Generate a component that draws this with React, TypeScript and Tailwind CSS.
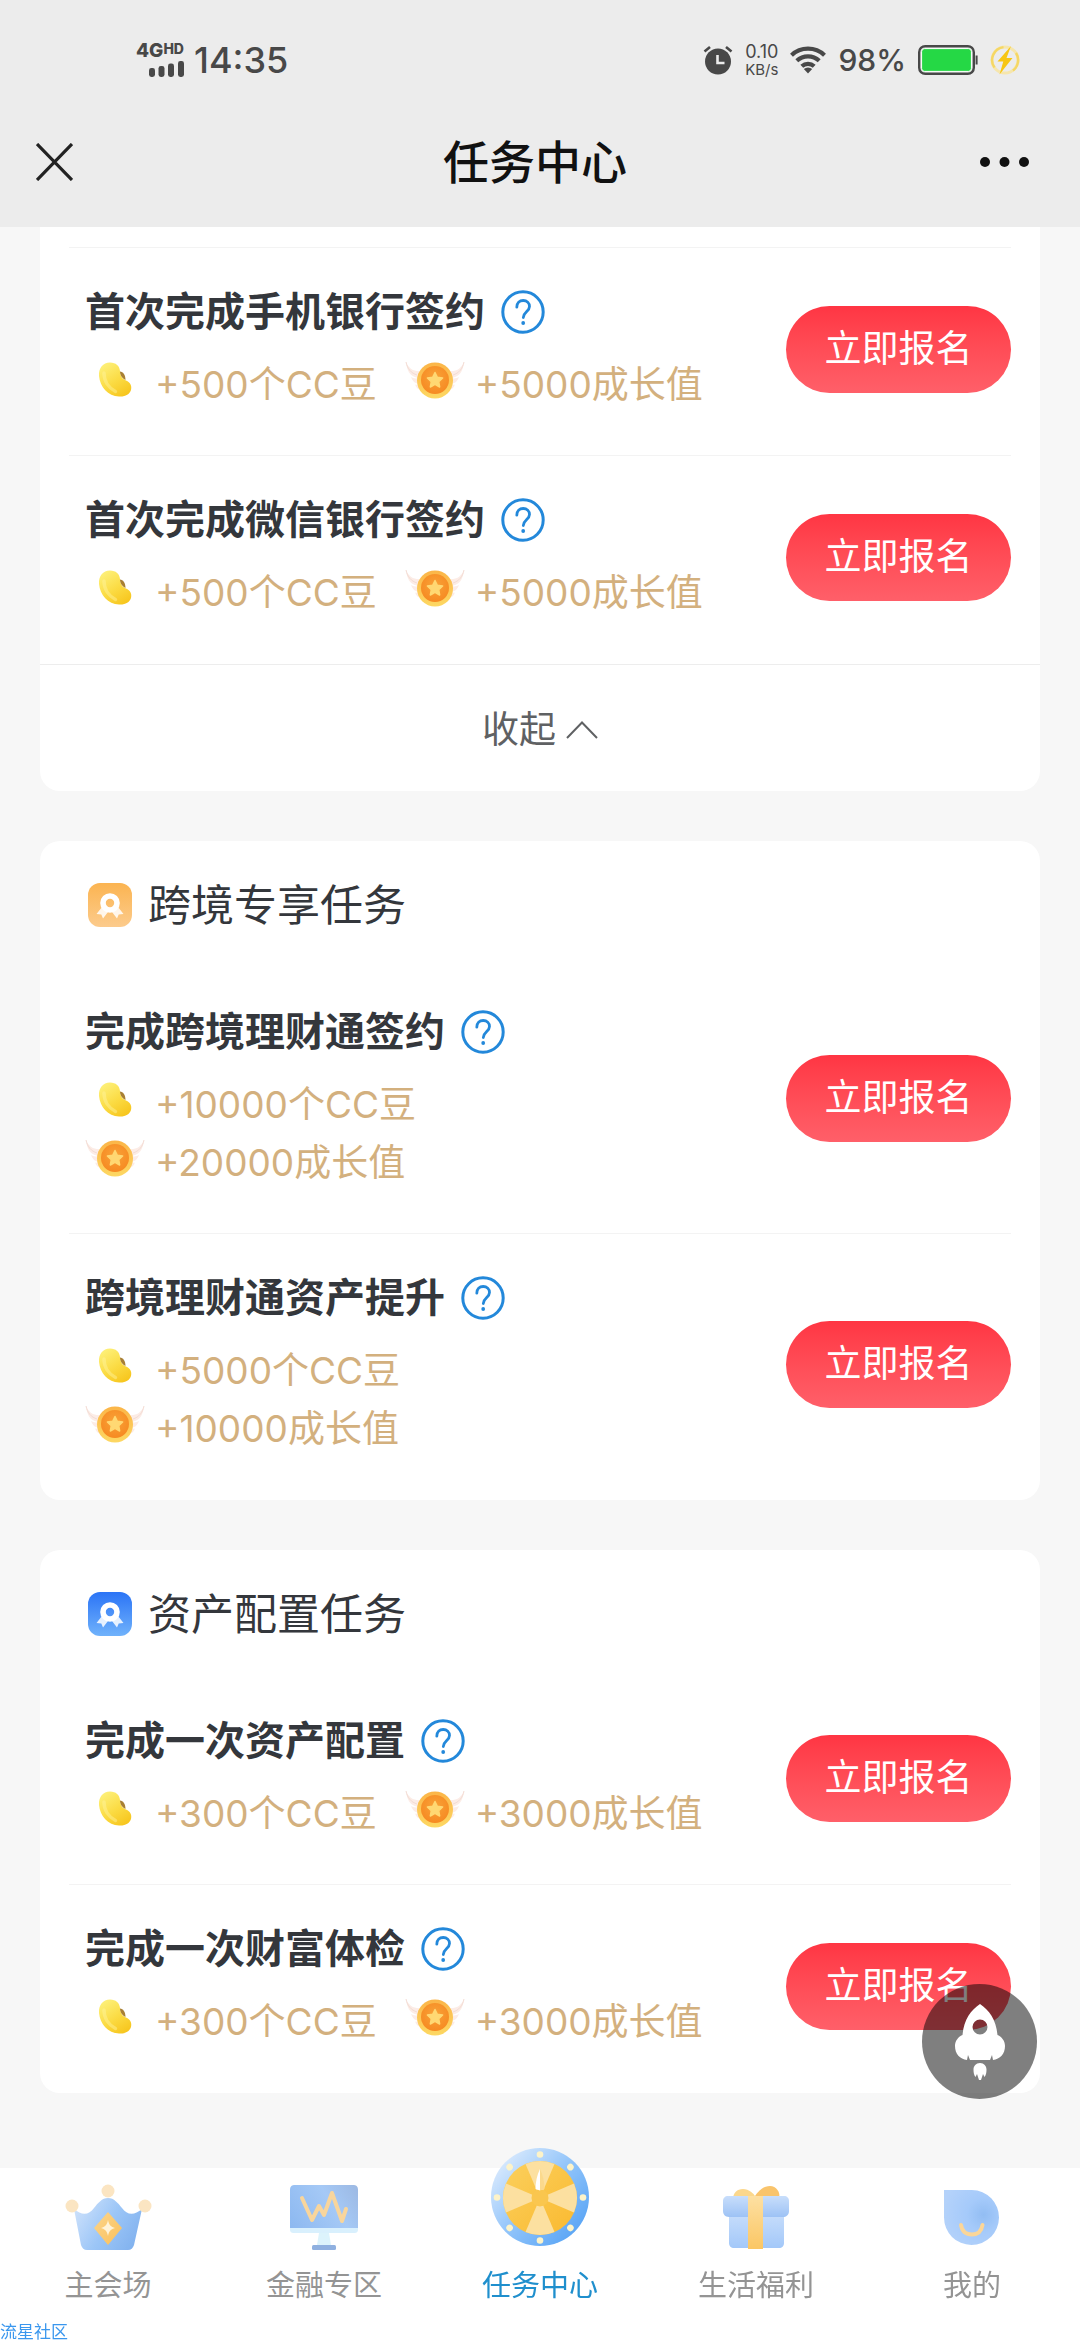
import React, { useState } from "react";

type Task = {
    title: string;
    beans: number;
    growth: number;
    stacked?: boolean;
};

const SIGN_TASKS: Task[] = [
    { title: "首次完成手机银行签约", beans: 500, growth: 5000 },
    { title: "首次完成微信银行签约", beans: 500, growth: 5000 },
];

const CROSS_BORDER_TASKS: Task[] = [
    { title: "完成跨境理财通签约", beans: 10000, growth: 20000, stacked: true },
    { title: "跨境理财通资产提升", beans: 5000, growth: 10000, stacked: true },
];

const ASSET_TASKS: Task[] = [
    { title: "完成一次资产配置", beans: 300, growth: 3000 },
    { title: "完成一次财富体检", beans: 300, growth: 3000 },
];

/* ---------- status bar ---------- */

const AlarmIcon = () => (
    <svg width="30" height="30" viewBox="0 0 30 30" fill="none">
        <circle cx="15" cy="16.5" r="13" fill="#484848" />
        <path d="M1.5 6.5 7 2M28.5 6.5 23 2" stroke="#484848" strokeWidth="2.6" />
        <path d="M14.5 10v8h7" stroke="#ececec" strokeWidth="2.6" />
    </svg>
);

const WifiIcon = () => (
    <svg width="36" height="28" viewBox="0 0 36 28" fill="none" stroke="#484848" strokeWidth="4.2">
        <path d="M1.5 9.2a24 24 0 0 1 33 0" />
        <path d="M6.8 14.8a16.4 16.4 0 0 1 22.4 0" />
        <path d="M11.8 20.2a9.2 9.2 0 0 1 12.4 0" />
        <path d="m18 27.5-4.2-4.4a6.2 6.2 0 0 1 8.4 0Z" fill="#484848" stroke="none" />
    </svg>
);

const BatteryIcon = () => (
    <svg width="60" height="30" viewBox="0 0 60 30" fill="none">
        <rect x="1.2" y="1.2" width="54.6" height="27.6" rx="6" stroke="#484848" strokeWidth="2.4" />
        <rect x="3.6" y="3.6" width="49.8" height="22.8" rx="3" fill="#25d845" stroke="#fff" strokeWidth="1" />
        <path d="M58.6 10.5v9" stroke="#484848" strokeWidth="2" />
    </svg>
);

const ChargeIcon = () => (
    <svg width="30" height="30" viewBox="0 0 30 30" fill="none">
        <circle cx="15" cy="15" r="13" stroke="#f6e6ac" strokeWidth="3" />
        <path d="M4.5 22.5a13 13 0 0 1 9-20.4M26 8a13 13 0 0 1-3 17.500" stroke="#f5d765" strokeWidth="2.4" />
        <path d="M21 1 7.5 16.5h5.8L9.5 29.5 22.5 13h-6Z" fill="#f7c614" />
    </svg>
);

const StatusBar = () => (
    <div className="flex h-[120px] items-center justify-between pl-[136px] pr-[60px] text-[#484848]">
        <div className="flex items-center gap-2.5">
            <div className="flex flex-col items-end gap-0.5">
                <div className="flex items-start font-extrabold">
                    <span className="text-[19px] leading-[16px]">4G</span>
                    <span className="text-[14px] leading-[12px]">HD</span>
                </div>
                <svg width="35" height="16" viewBox="0 0 35 16" fill="#484848">
                    <rect x="0" y="7" width="6" height="9" rx="2.4" />
                    <rect x="9.5" y="5" width="6" height="11" rx="2.4" />
                    <rect x="19" y="2.5" width="6" height="13.5" rx="2.4" />
                    <rect x="29" y="0" width="6" height="16" rx="2.4" />
                </svg>
            </div>
            <span className="text-[36px] font-medium leading-10">14:35</span>
        </div>
        <div className="flex items-center gap-3">
            <AlarmIcon />
            <div className="flex flex-col">
                <span className="text-[18px] leading-5">0.10</span>
                <span className="text-[15px] leading-4">KB/s</span>
            </div>
            <WifiIcon />
            <span className="text-[30px] font-medium leading-10">98%</span>
            <BatteryIcon />
            <ChargeIcon />
        </div>
    </div>
);

const TitleBar = () => (
    <div className="flex h-[107px] items-start justify-between pl-9 pr-[46px] pt-3.5">
        <button type="button" aria-label="关闭" className="flex h-14 w-14 items-center">
            <svg width="37" height="38" viewBox="0 0 37 38" fill="none" stroke="#222" strokeWidth="3.2">
                <path d="m1 1 35 36M36 1 1 37" />
            </svg>
        </button>
        <h1 className="text-[46px] font-medium leading-14 text-[#111]">任务中心</h1>
        <button type="button" aria-label="更多" className="flex h-14 w-14 items-center justify-end">
            <svg width="60" height="12" viewBox="0 0 60 12" fill="#111" className="shrink-0">
                <circle cx="11" cy="6" r="5" />
                <circle cx="30.5" cy="6" r="5" />
                <circle cx="50" cy="6" r="5" />
            </svg>
        </button>
    </div>
);

/* ---------- task cards ---------- */

const HelpIcon = () => (
    <svg width="44" height="44" viewBox="0 0 44 44" fill="none" stroke="#2388da" strokeLinecap="round">
        <circle cx="22" cy="22" r="20.2" strokeWidth="3" />
        <path d="M15.8 17.2c0-4.2 2.7-6.7 6.4-6.7s6.3 2.5 6.3 6c0 5-6.2 5.6-6.2 11" strokeWidth="2.8" />
        <circle cx="22.2" cy="33" r="1.9" fill="#2388da" stroke="none" />
    </svg>
);

const BeanIcon = () => (
    <svg width="60" height="48" viewBox="0 0 60 48" fill="none" className="shrink-0">
        <defs>
            <linearGradient id="bean" x1="16" y1="12" x2="36" y2="42" gradientUnits="userSpaceOnUse">
                <stop stopColor="#fdee74" />
                <stop offset=".5" stopColor="#fbdc45" />
                <stop offset="1" stopColor="#f7c61e" />
            </linearGradient>
        </defs>
        <path
            d="M14 20C13.500 12 18 6.500 25 6.500c6 0 9.500 3.500 10 8.500.4 5 2 8 6 9.500 4.500 2 6 5.500 5 9.500-1.500 4.500-6 7-12 6.500C23 40 15 31 14 20Z"
            fill="url(#bean)"
        />
        <path d="M19 17c0 8 4.500 15 11.500 18.500" stroke="#fff3a0" strokeWidth="3.500" strokeLinecap="round" opacity=".45" />
        <path d="M35 15.500c3 0 5.500 3.500 5.500 8.500-3.500-1.500-5.500-5-5.500-8.500Z" fill="#a87f33" />
    </svg>
);

const MedalIcon = () => (
    <svg width="60" height="48" viewBox="0 0 60 48" fill="none" className="shrink-0">
        <defs>
            <radialGradient id="medal" cx=".5" cy=".4" r=".6">
                <stop stopColor="#f9a238" />
                <stop offset="1" stopColor="#f68a22" />
            </radialGradient>
            <linearGradient id="medalRim" x1="0" y1="0" x2="0" y2="1">
                <stop stopColor="#fbb548" />
                <stop offset="1" stopColor="#fdd863" />
            </linearGradient>
        </defs>
        <path
            d="M1 6c1 10 5 15 13 16-4 1-6 0-8-1 2 5 5 7 9 7-2 1-4 1-5 .500 2 5 5 6 9 5L17 15C9 16 4 13 1 6ZM59 6c-1 10-5 15-13 16 4 1 6 0 8-1-2 5-5 7-9 7 2 1 4 1 5 .500-2 5-5 6-9 5l2-18.500c8 1 13-2 16-9Z"
            fill="#fcece6"
        />
        <path d="M1 6c1.500 7 5 11 11 13M59 6c-1.500 7-5 11-11 13" stroke="#f3dcd4" strokeWidth="1" />
        <circle cx="30" cy="24.500" r="18" fill="url(#medalRim)" />
        <circle cx="30" cy="24" r="14" fill="url(#medal)" />
        <path
            d="m30 16.500 2.300 4.800 5.300.700-3.900 3.700.950 5.300-4.650-2.600-4.650 2.600.950-5.300-3.900-3.700 5.300-.700Z"
            fill="#ffd873"
            stroke="#ffd873"
            strokeWidth="1.500"
            strokeLinejoin="round"
        />
    </svg>
);

const Reward = ({ icon, text }: { icon: React.ReactNode; text: string }) => (
    <div className="flex items-start gap-2.5">
        {icon}
        <span className="text-[37px] leading-[58px] text-[#d3b07e]">{text}</span>
    </div>
);

const TaskRow = ({ task }: { task: Task }) => (
    <li className="mx-[29px] flex items-center justify-between border-b border-[#f3f3f3] pb-[41px] pl-4 pt-9 last:border-transparent">
        <div className="flex flex-col gap-4">
            <div className="flex items-center gap-4">
                <h3 className="text-[40px] font-bold leading-14 text-[#34373c]">{task.title}</h3>
                <button type="button" aria-label={`${task.title}说明`}>
                    <HelpIcon />
                </button>
            </div>
            <div className={task.stacked ? "flex flex-col" : "flex gap-7"}>
                <Reward icon={<BeanIcon />} text={`+${task.beans}个CC豆`} />
                <Reward icon={<MedalIcon />} text={`+${task.growth}成长值`} />
            </div>
        </div>
        <button
            type="button"
            className="h-[87px] w-[225px] shrink-0 rounded-full bg-linear-to-b from-[#ff3543] to-[#ff5f69] pb-0.5 text-[37px] leading-none text-white"
        >
            立即报名
        </button>
    </li>
);

const MedalBadge = ({ tone }: { tone: "orange" | "blue" }) => {
    const [from, to] = tone === "orange" ? ["#fbb451", "#fccb8c"] : ["#2b74f6", "#70b2fb"];
    return (
        <svg width="44" height="44" viewBox="0 0 44 44" fill="none">
            <defs>
                <linearGradient id={`badge-${tone}`} x1="0" y1="0" x2="0" y2="1">
                    <stop stopColor={from} />
                    <stop offset="1" stopColor={to} />
                </linearGradient>
            </defs>
            <rect width="44" height="44" rx="12" fill={`url(#badge-${tone})`} />
            <path d="m14 24-5.500 7 4.800.500 1.700 4 5-6.500M30 24l5.500 7-4.800.500-1.700 4-5-6.500" fill="#fff" opacity=".85" />
            <circle cx="22" cy="20" r="7" stroke="#fff" strokeWidth="5.600" />
        </svg>
    );
};

const TaskCard = ({ title, tone, tasks }: { title: string; tone: "orange" | "blue"; tasks: Task[] }) => (
    <section className="rounded-[20px] bg-white">
        <div className="flex h-[127px] items-center gap-4 pl-12">
            <MedalBadge tone={tone} />
            <h2 className="text-[43px] leading-14 text-[#34373c]">{title}</h2>
        </div>
        <ul>
            {tasks.map((task) => (
                <TaskRow key={task.title} task={task} />
            ))}
        </ul>
    </section>
);

/* ---------- bottom navigation ---------- */

const CrownIcon = () => (
    <svg width="88" height="66" viewBox="0 0 88 66" fill="none" className="shrink-0">
        <defs>
            <linearGradient id="crown" x1="12" y1="20" x2="76" y2="60" gradientUnits="userSpaceOnUse">
                <stop stopColor="#cfe2fb" />
                <stop offset=".5" stopColor="#9cc6f7" />
                <stop offset="1" stopColor="#7fb0ee" />
            </linearGradient>
            <linearGradient id="crownGem" x1="0" y1="0" x2="1" y2="1">
                <stop stopColor="#fbd58d" />
                <stop offset="1" stopColor="#fbc05a" />
            </linearGradient>
        </defs>
        <path
            d="M10 25c8 7 15 6 20-1 4-5 8-10 14-10s10 5 14 10c5 7 12 8 20 1l-8 36c-1 3-3 5-6 5H23c-3 0-5-2-6-5Z"
            fill="url(#crown)"
        />
        <circle cx="8" cy="22" r="6.500" fill="#fbe5c2" />
        <circle cx="44" cy="7" r="6.500" fill="#fbe5c2" />
        <circle cx="81" cy="22" r="6.500" fill="#fbe5c2" />
        <path d="M44 28 58 44 44 61 30 44Z" fill="url(#crownGem)" />
        <path d="M44 36c1 5 3 7 7 8-4 1-6 3-7 8-1-5-3-7-7-8 4-1 6-3 7-8Z" fill="#fff3d8" />
    </svg>
);

const MonitorIcon = () => (
    <svg width="68" height="66" viewBox="0 0 68 66" fill="none" className="shrink-0">
        <defs>
            <linearGradient id="screen" x1="0" y1="44" x2="68" y2="0" gradientUnits="userSpaceOnUse">
                <stop stopColor="#8cb8f0" />
                <stop offset=".6" stopColor="#a5c9f6" />
                <stop offset="1" stopColor="#9cb8e2" />
            </linearGradient>
        </defs>
        <path d="M0 43h68v2c0 3-1 4-4 4H4c-3 0-4-1-4-4Z" fill="#d9f0fd" />
        <path d="M0 6c0-4 2-5 5-5h58c3 0 5 1 5 5v38H0Z" fill="url(#screen)" />
        <path d="M29 49h10l2 12H27Z" fill="#dcf3fc" />
        <rect x="22" y="61" width="24" height="5" rx="1.500" fill="#8fb0e0" />
        <path
            d="m12 14 10 22 7-14 5 9 8-22 10 28 4-12"
            stroke="#f8d59c"
            strokeWidth="4"
            strokeLinejoin="round"
            strokeLinecap="round"
        />
    </svg>
);

const WheelIcon = () => (
    <svg width="98" height="102" viewBox="0 0 98 102" fill="none" className="shrink-0">
        <defs>
            <linearGradient id="wheelRim" x1="10" y1="15" x2="88" y2="85" gradientUnits="userSpaceOnUse">
                <stop stopColor="#d6e8fd" />
                <stop offset=".5" stopColor="#8fc3fa" />
                <stop offset="1" stopColor="#5aa5f5" />
            </linearGradient>
            <linearGradient id="wheelFace" x1="0" y1="0" x2="1" y2="1">
                <stop stopColor="#fbd05e" />
                <stop offset="1" stopColor="#fab92f" />
            </linearGradient>
        </defs>
        <circle cx="49" cy="49" r="49" fill="url(#wheelRim)" />
        <circle cx="49" cy="50" r="37" fill="url(#wheelFace)" />
        {[0, 90, 180, 270].map((deg) => (
            <path key={deg} d="M49 50 34.500 16a37 37 0 0 1 29 0Z" fill="#fce0a0" transform={`rotate(${deg} 49 50)`} />
        ))}
        {[0, 45, 90, 135, 180, 225, 270, 315].map((deg) => (
            <circle key={deg} cx="49" cy="6.500" r="3.300" fill="#fdf3c8" transform={`rotate(${deg} 49 49.500)`} />
        ))}
        <circle cx="49" cy="50" r="8.500" fill="#fac64e" />
        <path d="M49 21c-3 6-4.500 13-4.500 20l4.500 1.500Z" fill="#fff" />
        <path d="M49 21c3 6 4.500 13 4.500 20L49 42.500Z" fill="#fbd98c" />
    </svg>
);

const GiftIcon = () => (
    <svg width="66" height="66" viewBox="0 0 66 66" fill="none" className="shrink-0">
        <defs>
            <linearGradient id="giftLid" x1="0" y1="0" x2="0" y2="1">
                <stop stopColor="#c8defb" />
                <stop offset="1" stopColor="#9dc2f5" />
            </linearGradient>
            <linearGradient id="giftBox" x1="0" y1="0" x2="0" y2="1">
                <stop stopColor="#c5dcfb" />
                <stop offset="1" stopColor="#a3c8f9" />
            </linearGradient>
            <linearGradient id="giftRibbon" x1="0" y1="0" x2="0" y2="1">
                <stop stopColor="#fde0a2" />
                <stop offset="1" stopColor="#fbc664" />
            </linearGradient>
        </defs>
        <path d="M10 15c0-6 4-10 10-10s11 5 12 7v3Z" fill="#fbd78c" />
        <path d="M56 15c2-7-3-13-9-13S36 6 32 12v3Z" fill="#f9c46c" />
        <path d="M6 31h55v28c0 3-2 5-5 5H11c-3 0-5-2-5-5Z" fill="url(#giftBox)" />
        <path d="M0 17c0-3 2-5 5-5h56c3 0 5 2 5 5v10c0 4-3 6-6 6H6c-4 0-6-3-6-6Z" fill="url(#giftLid)" />
        <path d="M25 12h15v21H25ZM25 33h15v32H25Z" fill="url(#giftRibbon)" />
    </svg>
);

const MineIcon = () => (
    <svg width="56" height="60" viewBox="0 0 56 60" fill="none" className="shrink-0">
        <defs>
            <radialGradient id="mine" cx=".72" cy=".45" r=".75">
                <stop stopColor="#92bdf3" />
                <stop offset=".4" stopColor="#a5cafa" />
                <stop offset="1" stopColor="#b4d2fa" />
            </radialGradient>
        </defs>
        <path d="M0 0h28a27.500 27.500 0 1 1-28 27.500Z" fill="url(#mine)" />
        <path d="M17 35c1 6 5 9.500 11 9.500S37.500 41 38.500 35" stroke="#fbd698" strokeWidth="4" strokeLinecap="round" />
    </svg>
);

const NAV_ITEMS = [
    { label: "主会场", icon: <CrownIcon /> },
    { label: "金融专区", icon: <MonitorIcon /> },
    { label: "任务中心", icon: <WheelIcon />, active: true },
    { label: "生活福利", icon: <GiftIcon /> },
    { label: "我的", icon: <MineIcon /> },
];

const BottomNav = () => (
    <nav className="sticky bottom-0 grid grid-cols-5 bg-white">
        {NAV_ITEMS.map(({ label, icon, active }) => (
            <a
                key={label}
                href="#"
                className={`flex h-[172px] flex-col items-center justify-end gap-4 pb-[34px] text-[29px] leading-10 ${active ? "text-[#1f8fcd]" : "text-[#949494]"}`}
            >
                {icon}
                <span>{label}</span>
            </a>
        ))}
        <span className="absolute bottom-0 left-0 text-[17px] leading-4 text-[#3a97ee]">流星社区</span>
    </nav>
);

const BackToTop = () => (
    <button
        type="button"
        aria-label="返回顶部"
        onClick={() => window.scrollTo({ top: 0, behavior: "smooth" })}
        className="fixed bottom-[241px] right-[43px] flex h-[115px] w-[115px] items-center justify-center rounded-full bg-black/50"
    >
        <svg width="50" height="76" viewBox="0 0 50 76" fill="#fff">
            <path
                fillRule="evenodd"
                d="M25 0c9 6 16 15 17.500 31 4.500 2 7.500 6 7.500 11 0 8-5 13-12 14l-1-5-2 5H15l-2-5-1 5C5 55 0 50 0 42c0-5 3-9 7.500-11C9 15 16 6 25 0Zm0 15.500a7.500 7.500 0 1 0 0 15 7.500 7.500 0 0 0 0-15Z"
            />
            <path d="M25 59c4 0 6.500 3 6.500 6.500 0 3-.5 5.500-2 7.500l-1.500-3-2 6h-2l-2-6-1.500 3c-1.500-2-2-4.500-2-7.500C18.500 62 21 59 25 59Z" />
        </svg>
    </button>
);

export default function App() {
    const [expanded, setExpanded] = useState(true);

    return (
        <div className="flex min-h-screen flex-col bg-[#f7f7f7] font-['Inter','Noto_Sans_CJK_SC',sans-serif]">
            <header className="bg-[#ececec]">
                <StatusBar />
                <TitleBar />
            </header>

            <main className="flex flex-1 flex-col gap-[50px] px-10 pb-[75px]">
                <section className="rounded-b-[20px] bg-white pt-5">
                    <div className="mx-[29px] border-t border-[#f3f3f3]" />
                    {expanded && (
                        <ul>
                            {SIGN_TASKS.map((task) => (
                                <TaskRow key={task.title} task={task} />
                            ))}
                        </ul>
                    )}
                    <button
                        type="button"
                        onClick={() => setExpanded(!expanded)}
                        className="flex h-[127px] w-full items-center justify-center gap-2.5 border-t border-[#ededed] pt-1 text-[37px] text-[#5f6163]"
                    >
                        {expanded ? "收起" : "展开"}
                        <svg
                            width="32"
                            height="18"
                            viewBox="0 0 32 18"
                            fill="none"
                            stroke="#5f6163"
                            strokeWidth="2"
                            className={expanded ? "" : "rotate-180"}
                        >
                            <path d="M1 17 16 1.500 31 17" />
                        </svg>
                    </button>
                </section>

                <TaskCard title="跨境专享任务" tone="orange" tasks={CROSS_BORDER_TASKS} />
                <TaskCard title="资产配置任务" tone="blue" tasks={ASSET_TASKS} />
            </main>

            <BottomNav />
            <BackToTop />
        </div>
    );
}
